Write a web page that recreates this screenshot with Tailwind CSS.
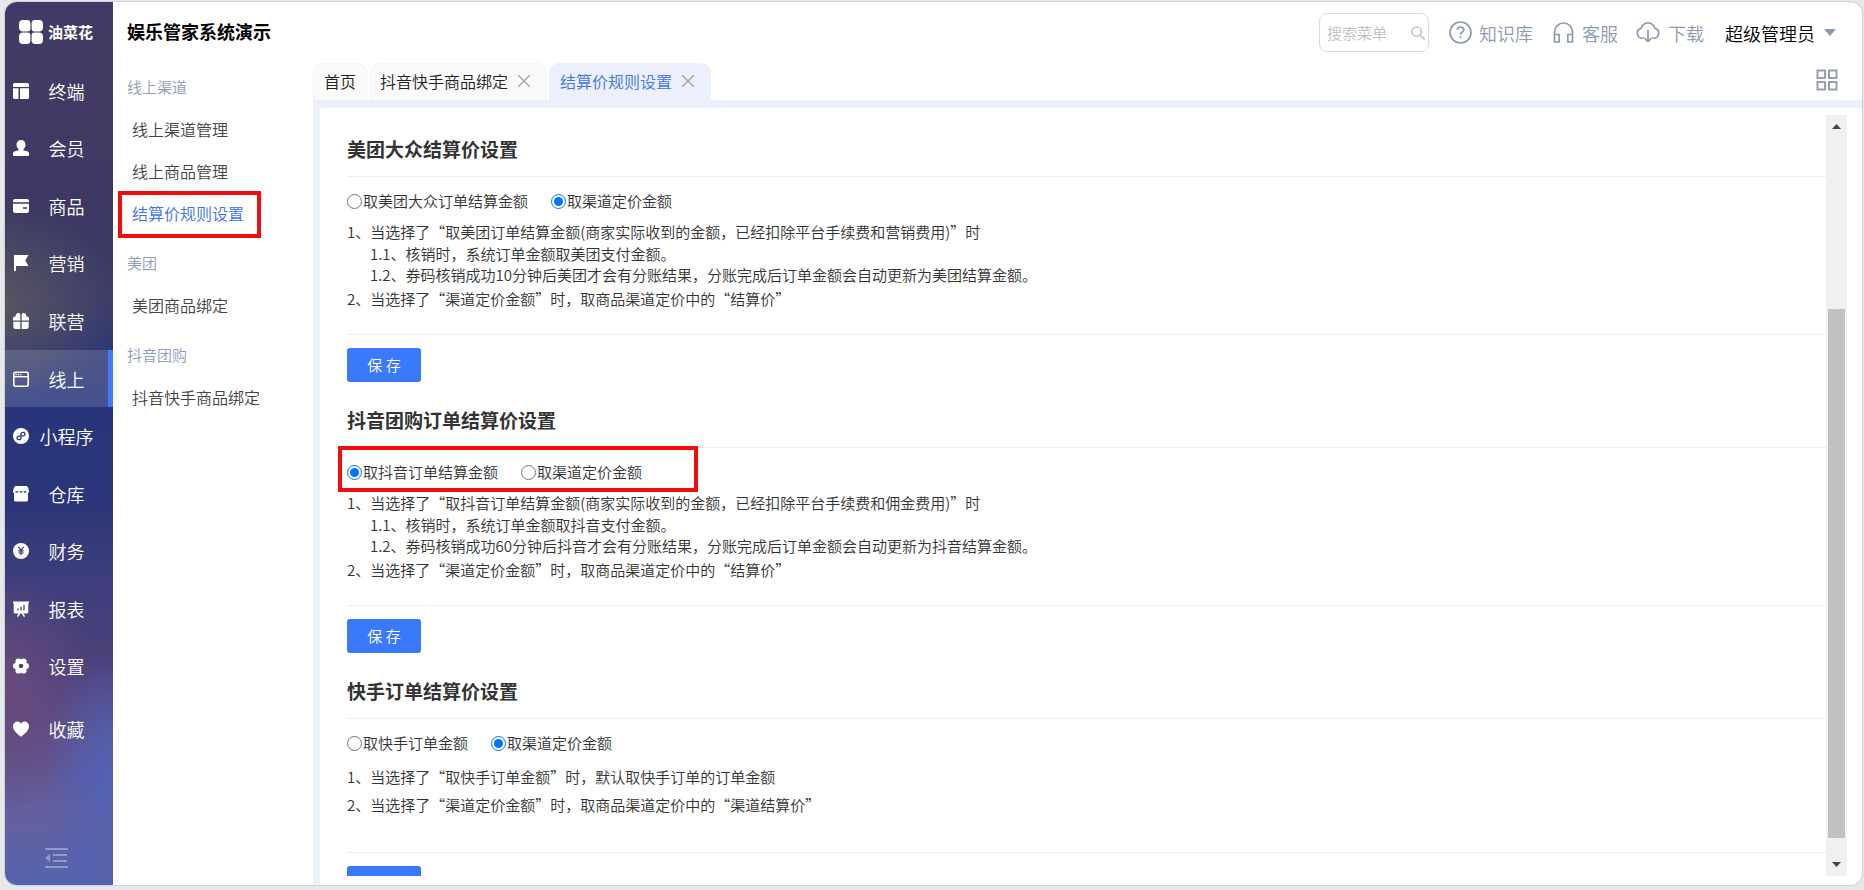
<!DOCTYPE html>
<html lang="zh-CN">
<head>
<meta charset="utf-8">
<title>娱乐管家系统演示</title>
<script src="https://cdn.jsdelivr.net/npm/@tailwindcss/browser@4"></script>
</head>
<body class="h-screen overflow-hidden bg-[#e6e8ea] pt-[2px] pr-[2px] pb-[5px] pl-[5px] font-['Noto_Sans_CJK_SC',sans-serif] font-[350] text-[#333]">
<div class="flex h-full overflow-hidden rounded-xl bg-white shadow-[0_0_0_1px_#cdd1d6]">

  <!-- primary sidebar -->
  <aside class="flex w-[108px] shrink-0 flex-col bg-[radial-gradient(ellipse_70px_130px_at_100%_88%,#5063b8_0%,transparent_100%),radial-gradient(ellipse_110px_100px_at_0%_34%,#575560_0%,transparent_100%),radial-gradient(ellipse_90px_120px_at_0%_78%,#684a7e_0%,transparent_100%),linear-gradient(180deg,#403b66_0%,#423a65_12%,#3c3863_24%,#3b3d6a_34%,#28357a_44%,#2b3579_56%,#3e3f7c_66%,#4c4179_75%,#5f5189_84%,#64609f_92%,#5663ae_100%)]">
    <div class="flex h-[60px] items-center gap-[5px] pl-[14px] text-white">
      <svg class="size-6" viewBox="0 0 24 24" fill="currentColor" aria-hidden="true"><path d="M4 0h4a3.400 3.400 0 0 1 3.400 3.400V9A2.400 2.400 0 0 1 9 11.400H4a4 4 0 0 1-4-4V4a4 4 0 0 1 4-4zM16 0h4a4 4 0 0 1 4 4v3.400a4 4 0 0 1-4 4h-5A2.400 2.400 0 0 1 12.600 9V3.400A3.400 3.400 0 0 1 16 0zM4 12.600h5a2.400 2.400 0 0 1 2.400 2.400v5.600A3.400 3.400 0 0 1 8 24H4a4 4 0 0 1-4-4v-3.400a4 4 0 0 1 4-4zM15 12.600h5a4 4 0 0 1 4 4V20a4 4 0 0 1-4 4h-4a3.400 3.400 0 0 1-3.400-3.400V15a2.400 2.400 0 0 1 2.400-2.400z"/></svg>
      <span class="text-[15px] font-bold">油菜花</span>
    </div>
    <nav class="flex h-[633px] flex-col text-lg text-white" aria-label="主菜单">
      <a href="#" class="flex flex-1 items-center pl-2">
        <svg class="size-4 shrink-0" viewBox="0 0 16 16" fill="currentColor" aria-hidden="true"><path d="M1.500 0h13A1.500 1.500 0 0 1 16 1.500V4H0V1.500A1.500 1.500 0 0 1 1.500 0zM0 5.200h5.500V16h-4A1.500 1.500 0 0 1 0 14.500zM7 5.200h4V16H7zM11.600 5.200H16v9.300a1.500 1.500 0 0 1-1.500 1.500h-2.900z"/><path d="M10.500 5.200h1.600V16h-1.600z"/></svg>
        <span class="flex-1 pr-[9px] text-center">终端</span></a>
      <a href="#" class="flex flex-1 items-center pl-2">
        <svg class="size-4 shrink-0" viewBox="0 0 16 16" fill="currentColor" aria-hidden="true"><path d="M8 0c2.700 0 4.500 2 4.500 4.600 0 2-.8 3.600-2 4.500v1.100l4.200 1.300c.8.300 1.300.9 1.300 1.700V15a1 1 0 0 1-1 1H1a1 1 0 0 1-1-1v-1.800c0-.8.500-1.400 1.300-1.700l4.200-1.300V9.100c-1.200-.9-2-2.500-2-4.500C3.500 2 5.300 0 8 0z"/></svg>
        <span class="flex-1 pr-[9px] text-center">会员</span></a>
      <a href="#" class="flex flex-1 items-center pl-2">
        <svg class="size-4 shrink-0" viewBox="0 0 16 16" fill="currentColor" aria-hidden="true"><path d="M2 1h12a2 2 0 0 1 2 2v1.300H0V3a2 2 0 0 1 2-2z"/><path fill-rule="evenodd" d="M0 5.700h16V13a2 2 0 0 1-2 2H2a2 2 0 0 1-2-2zM10 9.300v1.500h4V9.300z"/></svg>
        <span class="flex-1 pr-[9px] text-center">商品</span></a>
      <a href="#" class="flex flex-1 items-center pl-2">
        <svg class="size-4 shrink-0" viewBox="0 0 16 16" fill="currentColor" aria-hidden="true"><path d="M1 0h14.500l-3.300 5.500 3.300 5.500H3v5H1z"/></svg>
        <span class="flex-1 pr-[9px] text-center">营销</span></a>
      <a href="#" class="flex flex-1 items-center pl-2">
        <svg class="size-4 shrink-0" viewBox="0 0 16 16" fill="currentColor" aria-hidden="true"><path d="M7.300 1.400V7.500H0V5.600a2 2 0 0 1 2-2h.6C2.500 1.200 3.800 0 5.200 0c.9 0 1.600.5 2.100 1.400zM8.700 1.400C9.200.5 9.900 0 10.800 0c1.400 0 2.700 1.200 2.600 3.600h.6a2 2 0 0 1 2 2v1.900H8.700zM.3 8.800h7V16H2.800a2.500 2.500 0 0 1-2.500-2.500zM8.700 8.800h7v4.700a2.500 2.500 0 0 1-2.500 2.500H8.700z"/></svg>
        <span class="flex-1 pr-[9px] text-center">联营</span></a>
      <a href="#" aria-current="page" class="flex flex-1 items-center border-r-[5px] border-[#3d7bff] bg-white/15 pl-2">
        <svg class="size-4 shrink-0" viewBox="0 0 16 16" aria-hidden="true"><rect x=".8" y="1.300" width="14.400" height="13.900" rx="1.500" fill="none" stroke="currentColor" stroke-width="1.600"/><path d="M1 5.700h14" stroke="currentColor" stroke-width="1.400"/><path d="M2.500 3.500h6" stroke="currentColor" stroke-width="1.300" stroke-dasharray="1.300 1"/></svg>
        <span class="flex-1 pr-1 text-center">线上</span></a>
      <a href="#" class="flex flex-1 items-center pl-2">
        <svg class="size-4 shrink-0" viewBox="0 0 16 16" aria-hidden="true"><circle cx="8" cy="8" r="8" fill="currentColor"/><path d="M6.800 8.100C5.200 7.800 4 8.700 4 9.900c0 1 .8 1.700 1.800 1.700 1.200 0 2.200-.8 2.200-1.900V6.300c0-1.100 1-1.900 2.200-1.900 1 0 1.800.7 1.800 1.700 0 1.200-1.200 2.100-2.700 1.800" fill="none" stroke="#2a3679" stroke-width="1.300" stroke-linecap="round"/></svg>
        <span class="flex-1 pr-[9px] text-center">小程序</span></a>
      <a href="#" class="flex flex-1 items-center pl-2">
        <svg class="size-4 shrink-0" viewBox="0 0 16 16" aria-hidden="true"><path fill="currentColor" d="M3 0h10c1 0 1.700.6 2 1.500L16 5c0 1-.4 1.700-1 2v7a1.500 1.500 0 0 1-1.500 1.500h-11A1.500 1.500 0 0 1 1 14V7C.4 6.700 0 6 0 5l1-3.500C1.300.6 2 0 3 0z"/><path d="M2.500 5.800h11" stroke="#2a3679" stroke-width="1.200" stroke-dasharray="2.600 1.500"/></svg>
        <span class="flex-1 pr-[9px] text-center">仓库</span></a>
      <a href="#" class="flex flex-1 items-center pl-2">
        <svg class="size-4 shrink-0" viewBox="0 0 16 16" aria-hidden="true"><circle cx="8" cy="8" r="8" fill="currentColor"/><path d="M5.300 3.800 8 7.300l2.700-3.500M8 7.300v5M5.300 7.900h5.400M5.300 10h5.400" fill="none" stroke="#303a7c" stroke-width="1.200"/></svg>
        <span class="flex-1 pr-[9px] text-center">财务</span></a>
      <a href="#" class="flex flex-1 items-center pl-2">
        <svg class="size-4 shrink-0" viewBox="0 0 16 16" aria-hidden="true"><path fill="currentColor" d="M0 .5h16v1.400h-.7V11a1.500 1.500 0 0 1-1.500 1.500H2.200A1.500 1.500 0 0 1 .7 11V1.900H0z"/><path d="M6.800 12 4.500 15.600M9.200 12l2.300 3.600" stroke="currentColor" stroke-width="1.500"/><path d="M5 9.300V7.500M8 9.300V5.800M11 9.300V4" stroke="#40407c" stroke-width="1.300"/></svg>
        <span class="flex-1 pr-[9px] text-center">报表</span></a>
      <a href="#" class="flex flex-1 items-center pl-2">
        <svg class="size-4 shrink-0" viewBox="0 0 16 16" aria-hidden="true"><g fill="currentColor"><circle cx="3.100" cy="8" r="3.100"/><circle cx="12.900" cy="8" r="3.100"/><circle cx="5.500" cy="3.500" r="3.100"/><circle cx="10.500" cy="3.500" r="3.100"/><circle cx="5.500" cy="12.500" r="3.100"/><circle cx="10.500" cy="12.500" r="3.100"/><circle cx="8" cy="8" r="5"/></g><circle cx="8" cy="8" r="2.300" fill="#50447b"/></svg>
        <span class="flex-1 pr-[9px] text-center">设置</span></a>
    </nav>
    <a href="#" class="mt-[5px] flex h-[58px] items-center pl-2 text-lg text-white">
      <svg class="size-4 shrink-0" viewBox="0 0 16 16" fill="currentColor" aria-hidden="true"><path d="M8 15.800C3.500 12.400 0 9.300 0 5.300 0 2.700 1.900.6 4.300.6 5.900.6 7.200 1.400 8 2.700 8.800 1.400 10.100.6 11.700.6 14.100.6 16 2.700 16 5.300c0 4-3.500 7.100-8 10.500z"/></svg>
      <span class="flex-1 pr-[9px] text-center">收藏</span></a>
    <button type="button" aria-label="收起菜单" class="mt-auto mb-4 ml-[39px] w-6 text-[#8f9cc9]">
      <svg class="h-[22px] w-6" viewBox="0 0 24 22" fill="none" stroke="currentColor" stroke-width="2" aria-hidden="true"><path d="M1 2h23M9 8h14M9 14h14M1 20h23"/><path d="M1 11l5-4v8z" fill="currentColor" stroke="none"/></svg>
    </button>
  </aside>

  <!-- secondary menu -->
  <aside class="w-[200px] shrink-0 pl-[14px]">
    <h1 class="flex h-[58px] items-center text-lg font-bold text-black">娱乐管家系统演示</h1>
    <nav class="pt-[6px] text-base text-[#444]" aria-label="线上">
      <h2 class="flex h-[42px] items-center text-[15px] text-[#8f9cba]">线上渠道</h2>
      <a href="#" class="flex h-[42px] items-center pl-[5px]">线上渠道管理</a>
      <a href="#" class="flex h-[42px] items-center pl-[5px]">线上商品管理</a>
      <div class="relative">
        <a href="#" aria-current="page" class="flex h-[42px] items-center pl-[5px] text-[#4070f4]">结算价规则设置</a>
        <div class="pointer-events-none absolute -top-px -left-[9px] h-[47px] w-[143px] border-4 border-[#f20d0d]"></div>
      </div>
      <h2 class="mt-2 flex h-[42px] items-center text-[15px] text-[#8f9cba]">美团</h2>
      <a href="#" class="flex h-[42px] items-center pl-[5px]">美团商品绑定</a>
      <h2 class="mt-2 flex h-[42px] items-center text-[15px] text-[#8f9cba]">抖音团购</h2>
      <a href="#" class="flex h-[42px] items-center pl-[5px]">抖音快手商品绑定</a>
    </nav>
  </aside>

  <div class="flex min-w-0 flex-1 flex-col">
    <!-- top bar -->
    <header class="flex h-[61px] items-center justify-end pr-[26px] text-lg text-[#8d9ab5]">
      <div class="flex h-[39px] w-[110px] items-center rounded-lg border border-[#d9d9d9] pr-[3px] pl-[7px]">
        <input type="text" aria-label="搜索菜单" placeholder="搜索菜单" class="w-0 min-w-0 flex-1 text-[15px] outline-none placeholder:text-[#bfbfbf]">
        <svg class="size-[14px] shrink-0" viewBox="0 0 14 14" fill="none" stroke="#bdbdbd" stroke-width="1.300" aria-hidden="true"><circle cx="5.500" cy="5.500" r="4.700"/><path d="m9 9 4.700 4.700"/></svg>
      </div>
      <a href="#" class="ml-5 flex items-center gap-[7px]">
        <svg class="size-[23px]" viewBox="0 0 23 23" fill="none" stroke="currentColor" stroke-width="1.700" aria-hidden="true"><circle cx="11.500" cy="11.500" r="10.500"/><path d="M8.300 9c0-1.900 1.400-3 3.200-3s3.200 1.200 3.200 2.800c0 2.300-3.200 2.300-3.200 4.900M11.500 15.300v1.900"/></svg>
        知识库</a>
      <a href="#" class="ml-5 flex items-center gap-2">
        <svg class="size-[21px]" viewBox="0 0 21 21" fill="none" stroke="currentColor" stroke-width="1.700" aria-hidden="true"><path d="M1.500 20V10a9 9 0 0 1 18 0v10M1.500 12.500h4.700V20H1.500zM14.800 12.500h4.700V20h-4.700z"/></svg>
        客服</a>
      <a href="#" class="ml-[18px] flex items-center gap-2">
        <svg class="h-[21px] w-6" viewBox="0 0 24 21" fill="none" stroke="currentColor" stroke-width="1.700" aria-hidden="true"><path d="M8.500 16H6a4.900 4.900 0 0 1-.8-9.700C6.200 3 8.800 1 12 1s5.800 2 6.800 5.300A4.900 4.900 0 0 1 18 16h-2.500"/><path d="M12 8v11M8.800 16.300 12 19.500l3.200-3.200"/></svg>
        下载</a>
      <button type="button" class="ml-[21px] flex items-center gap-[9px] text-black">超级管理员
        <svg class="h-[7px] w-[12px]" viewBox="0 0 12 7" fill="#8d9ab5" aria-hidden="true"><path d="M0 0h12L6 7z"/></svg>
      </button>
    </header>

    <!-- page tabs -->
    <div class="flex h-[37px] items-stretch pr-[24px] text-base text-[#222]">
      <div class="flex w-[54px] items-center justify-center rounded-t-[10px] border border-b-0 border-[#f3f3f3] bg-[#fafafa] pb-[2px]"><a href="#">首页</a></div>
      <div class="ml-[3px] flex w-[177px] items-center gap-[10px] rounded-t-[10px] border border-b-0 border-[#f3f3f3] bg-[#fafafa] pb-[2px] pl-[9px]"><a href="#">抖音快手商品绑定</a>
        <button type="button" aria-label="关闭 抖音快手商品绑定"><svg class="size-3" viewBox="0 0 12 12" stroke="#9aa0ad" stroke-width="1.300" aria-hidden="true"><path d="m0 0 12 12M12 0 0 12"/></svg></button></div>
      <div class="ml-[2px] flex w-[162px] items-center gap-[10px] rounded-t-[10px] bg-[#ebf0fa] pb-[2px] pl-[11px] text-[#4070f4]"><a href="#" aria-current="page">结算价规则设置</a>
        <button type="button" aria-label="关闭 结算价规则设置"><svg class="size-3" viewBox="0 0 12 12" stroke="#9aa0ad" stroke-width="1.300" aria-hidden="true"><path d="m0 0 12 12M12 0 0 12"/></svg></button></div>
      <button type="button" aria-label="全部标签" class="mb-[4px] ml-auto text-[#97a0b3]">
        <svg class="size-[22px]" viewBox="0 0 22 22" fill="none" stroke="currentColor" stroke-width="2" aria-hidden="true"><path d="M1.500 1.500h7.500v7.500H1.500zM13 1.500h7.500v7.500H13zM1.500 13h7.500v7.500H1.500zM13 13h7.500v7.500H13z"/></svg>
      </button>
    </div>

    <!-- page body -->
    <div class="flex min-h-0 flex-1 border-t-8 border-l-[7px] border-[#ebf0fa] pt-[7px] pr-[15px] pb-[9px]">
      <main class="min-w-0 flex-1 overflow-hidden pl-[27px] text-[15px]">
        <section class="pt-5">
          <h3 class="border-b border-[#eee] pb-[13px] text-[19px] leading-7 font-bold">美团大众结算价设置</h3>
          <div class="mt-[14px] flex h-5 items-center gap-[23px]">
            <label class="flex items-center gap-px"><input type="radio" name="meituan" class="size-[15px]">取美团大众订单结算金额</label>
            <label class="flex items-center gap-px"><input type="radio" name="meituan" checked class="size-[15px]">取渠道定价金额</label>
          </div>
          <div class="mt-[10px] leading-[22px]">
            <p>1、当选择了“取美团订单结算金额(商家实际收到的金额，已经扣除平台手续费和营销费用)”时</p>
            <div class="mb-[3px] pl-[23px] leading-[21px]">
              <p>1.1、核销时，系统订单金额取美团支付金额。</p>
              <p>1.2、券码核销成功10分钟后美团才会有分账结果，分账完成后订单金额会自动更新为美团结算金额。</p>
            </div>
            <p>2、当选择了“渠道定价金额”时，取商品渠道定价中的“结算价”</p>
          </div>
          <div class="mt-6 border-t border-[#eee] pt-[13px]">
            <button type="button" class="block h-[34px] w-[74px] rounded-[3px] bg-[#3a78fc] text-[15px] text-white">保 存</button>
          </div>
        </section>
        <section class="pt-6">
          <h3 class="border-b border-[#eee] pb-[13px] text-[19px] leading-7 font-bold">抖音团购订单结算价设置</h3>
          <div class="relative mt-[14px] flex h-5 items-center gap-[23px]">
            <label class="flex items-center gap-px"><input type="radio" name="douyin" checked class="size-[15px]">取抖音订单结算金额</label>
            <label class="flex items-center gap-px"><input type="radio" name="douyin" class="size-[15px]">取渠道定价金额</label>
            <div class="pointer-events-none absolute -top-4 -left-[9px] h-[46px] w-[360px] border-4 border-[#f20d0d]"></div>
          </div>
          <div class="mt-[10px] leading-[22px]">
            <p>1、当选择了“取抖音订单结算金额(商家实际收到的金额，已经扣除平台手续费和佣金费用)”时</p>
            <div class="mb-[3px] pl-[23px] leading-[21px]">
              <p>1.1、核销时，系统订单金额取抖音支付金额。</p>
              <p>1.2、券码核销成功60分钟后抖音才会有分账结果，分账完成后订单金额会自动更新为抖音结算金额。</p>
            </div>
            <p>2、当选择了“渠道定价金额”时，取商品渠道定价中的“结算价”</p>
          </div>
          <div class="mt-6 border-t border-[#eee] pt-[13px]">
            <button type="button" class="block h-[34px] w-[74px] rounded-[3px] bg-[#3a78fc] text-[15px] text-white">保 存</button>
          </div>
        </section>
        <section class="pt-6">
          <h3 class="border-b border-[#eee] pb-[13px] text-[19px] leading-7 font-bold">快手订单结算价设置</h3>
          <div class="mt-[14px] flex h-5 items-center gap-[23px]">
            <label class="flex items-center gap-px"><input type="radio" name="kuaishou" class="size-[15px]">取快手订单金额</label>
            <label class="flex items-center gap-px"><input type="radio" name="kuaishou" checked class="size-[15px]">取渠道定价金额</label>
          </div>
          <div class="mt-[10px] leading-7">
            <p>1、当选择了“取快手订单金额”时，默认取快手订单的订单金额</p>
            <p>2、当选择了“渠道定价金额”时，取商品渠道定价中的“渠道结算价”</p>
          </div>
          <div class="mt-[33px] border-t border-[#eee] pt-[13px]">
            <button type="button" class="block h-[34px] w-[74px] rounded-[3px] bg-[#3a78fc] text-[15px] text-white">保 存</button>
          </div>
        </section>
      </main>
      <!-- scrollbar -->
      <div class="flex w-[21px] shrink-0 flex-col items-center bg-[#f0f0f0]" aria-hidden="true">
        <svg class="h-[21px] w-[21px] shrink-0" viewBox="0 0 21 21" fill="#454545"><path d="M6 14h9l-4.500-5z"/></svg>
        <div class="flex w-[17px] flex-1 flex-col">
          <div class="grow-[173]"></div>
          <div class="grow-[529] bg-[#c1c1c1]"></div>
          <div class="grow-[17]"></div>
        </div>
        <svg class="h-[21px] w-[21px] shrink-0" viewBox="0 0 21 21" fill="#454545"><path d="M6 7h9l-4.500 5z"/></svg>
      </div>
    </div>
  </div>
</div>
</body>
</html>
